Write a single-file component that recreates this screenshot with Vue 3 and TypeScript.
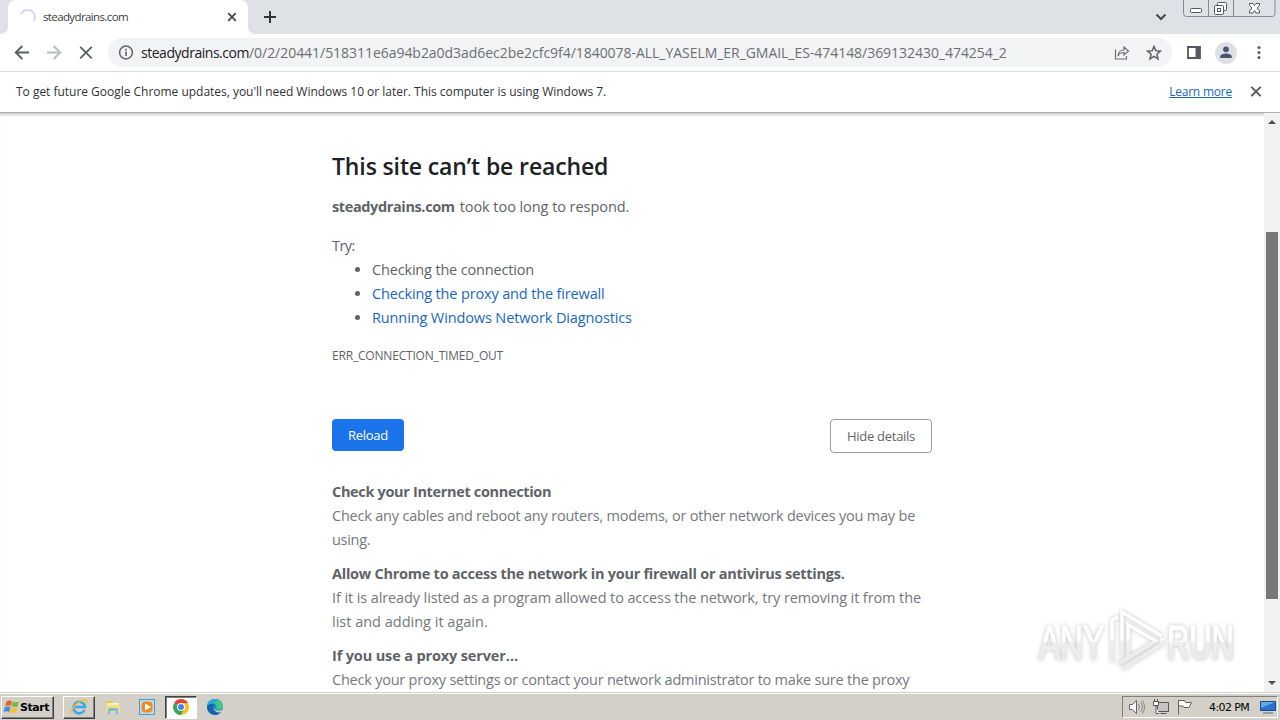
<script setup lang="ts">
const host = 'steadydrains.com'
const path = '/0/2/20441/518311e6a94b2a0d3ad6ec2be2cfc9f4/1840078-ALL_YASELM_ER_GMAIL_ES-474148/369132430_474254_2'
const suggestions = [
  { text: 'Checking the connection', link: false },
  { text: 'Checking the proxy and the firewall', link: true },
  { text: 'Running Windows Network Diagnostics', link: true },
]
const details = [
  { title: 'Check your Internet connection', lines: ['Check any cables and reboot any routers, modems, or other network devices you may be', 'using.'] },
  { title: 'Allow Chrome to access the network in your firewall or antivirus settings.', lines: ['If it is already listed as a program allowed to access the network, try removing it from the', 'list and adding it again.'] },
  { title: 'If you use a proxy server…', lines: ['Check your proxy settings or contact your network administrator to make sure the proxy'] },
]
</script>

<template>
  <div class="screen">
    <header class="tabs">
      <div class="prev"></div>
      <div class="tab">
        <svg class="spin" width="16" height="16" viewBox="0 0 16 16"><path d="M1 5.500A7.200 7.200 0 0 1 8 1a7 7 0 0 1 7 7 7 7 0 0 1-1.300 4" fill="none" stroke="#d5d5f5" stroke-width="1.800" /></svg>
        <span class="tab-title">{{ host }}</span>
        <svg width="10" height="10" viewBox="0 0 10 10"><path d="M1.200 1.200l7.600 7.600M8.800 1.200L1.200 8.800" stroke="#45484c" stroke-width="1.800" /></svg>
      </div>
      <div class="after-tab"><svg width="14" height="14" viewBox="0 0 14 14"><path d="M7 1v12M1 7h12" stroke="#303338" stroke-width="2" /></svg></div>
      <svg class="chev" width="12" height="8" viewBox="0 0 12 8"><path d="M1.500 1.500L6 6l4.500-4.500" fill="none" stroke="#44474b" stroke-width="2" /></svg>
      <svg class="winctl" width="94" height="18" viewBox="0 0 94 18">
        <path d="M.5 0v13.500q0 3 3 3h85.500q3 0 3-3V0M25.500 0v16M50.500 0v16" fill="none" stroke="#858990" />
        <g fill="#fff" stroke="#54575d">
          <rect x="7.500" y="8.500" width="11" height="4" rx="1" />
          <rect x="34.500" y="2.500" width="9" height="8" rx="1" />
          <rect x="31.500" y="5.500" width="9" height="9" rx="1" />
          <rect x="34.500" y="8.500" width="3" height="3" />
          <path d="M66.500 3.500h3.500l1.500 2 1.500-2h3.500v2l-2.500 2.500 2.500 3v2H73l-1.500-2.500L70 13h-3.500v-2l2.500-3-2.500-2.500z" />
        </g>
      </svg>
    </header>

    <nav class="toolbar">
      <svg width="16" height="16" viewBox="0 0 16 16"><path d="M15 7.500H2M8.300 1L1.800 7.500l6.500 6.500" fill="none" stroke="#5a5d61" stroke-width="1.900" /></svg>
      <svg class="fwd" width="16" height="16" viewBox="0 0 16 16"><path d="M1 7.500h13M7.700 1l6.500 6.500L7.700 14" fill="none" stroke="#b9bbbe" stroke-width="1.900" /></svg>
      <svg class="stop" width="14" height="14" viewBox="0 0 14 14"><path d="M1.200.8l11.600 11.600M12.800.8L1.200 12.400" stroke="#5a5d61" stroke-width="1.800" /></svg>
      <div class="omnibox">
        <svg width="16" height="16" viewBox="0 0 16 16"><circle cx="8" cy="7.500" r="6.400" fill="none" stroke="#5f6368" stroke-width="1.500" /><path d="M8 6.500V11M8 3.800v1.700" stroke="#5f6368" stroke-width="1.600" /></svg>
        <div class="url"><span class="host">{{ host }}</span><span class="path">{{ path }}</span></div>
        <svg width="16" height="16" viewBox="0 0 16 16"><path d="M1.500 4.500v9.500h11v-3M4 11c.3-4 2.600-6 6-6V2L14.500 6 10 10V7.500c-3 0-4.700.8-6 3.500z" fill="none" stroke="#6a6d72" stroke-width="1.200" /></svg>
        <svg class="star" width="16" height="16" viewBox="0 0 16 16"><path d="M8 1.400l1.800 4.300 4.700.4-3.600 3.100 1.100 4.600L8 11.300l-4 2.500 1.100-4.600L1.500 6.100l4.700-.4z" fill="none" stroke="#5f6368" stroke-width="1.500" /></svg>
      </div>
      <svg class="panel" width="14" height="14" viewBox="0 0 14 14"><path d="M1 1h12v11H1z" fill="#fff" stroke="#55585c" stroke-width="1.800" /><path d="M8.500 1H13v11H8.500z" fill="#55585c" /></svg>
      <svg class="avatar" width="22" height="22" viewBox="0 0 22 22"><circle cx="11" cy="11" r="11" fill="#dde0e5" /><circle cx="11" cy="7.300" r="2.900" fill="#495573" /><path d="M5.200 16v-1.600c0-2 3.400-3 5.800-3s5.800 1 5.800 3V16z" fill="#495573" /></svg>
      <svg class="dots" width="4" height="14" viewBox="0 0 4 14" fill="#55585c"><circle cx="2" cy="1.600" r="1.500" /><circle cx="2" cy="6.500" r="1.500" /><circle cx="2" cy="11.500" r="1.500" /></svg>
    </nav>

    <div class="infobar">
      <span class="info">To get future Google Chrome updates, you'll need Windows 10 or later. This computer is using Windows 7.</span>
      <a class="learn">Learn more</a>
      <svg width="12" height="12" viewBox="0 0 12 12"><path d="M1.300 1.800l9.400 9.400M10.700 1.800l-9.400 9.400" stroke="#55585c" stroke-width="1.900" /></svg>
    </div>

    <main class="viewport">
      <div class="page">
        <h1>This site can’t be reached</h1>
        <p class="summary"><strong>{{ host }}</strong><span class="took">took too long to respond.</span></p>
        <p class="try">Try:</p>
        <ul><li v-for="(s, i) in suggestions" :key="i"><span :class="['s' + i, { link: s.link }]">{{ s.text }}</span></li></ul>
        <p class="code">ERR_CONNECTION_TIMED_OUT</p>
        <div class="buttons"><button class="reload">Reload</button><button class="hide">Hide details</button></div>
        <section v-for="(d, i) in details" :key="i" :class="'d' + i">
          <h2>{{ d.title }}</h2>
          <p v-for="(l, j) in d.lines" :key="j" :class="'l' + j">{{ l }}</p>
        </section>
      </div>
      <div class="scroll">
        <svg width="8" height="4" viewBox="0 0 8 4"><path d="M0 4l4-4 4 4z" fill="#505050" /></svg>
        <div class="thumb"></div>
        <svg class="down" width="8" height="4" viewBox="0 0 8 4"><path d="M0 0l4 4 4-4z" fill="#505050" /></svg>
      </div>
    </main>

    <svg class="mark" width="210" height="76" viewBox="0 0 210 76">
      <defs>
        <linearGradient id="fade" gradientUnits="userSpaceOnUse" x1="0" y1="6" x2="0" y2="68"><stop offset="0" stop-color="#fff" /><stop offset=".5" stop-color="#fff" /><stop offset=".53" stop-color="#efefef" /><stop offset="1" stop-color="#ebebeb" /></linearGradient>
        <linearGradient id="letters" gradientUnits="userSpaceOnUse" x1="0" y1="-36" x2="0" y2="0"><stop offset="0" stop-color="#fff" /><stop offset=".5" stop-color="#fff" /><stop offset=".54" stop-color="#efefef" /><stop offset="1" stop-color="#ebebeb" /></linearGradient>
      </defs>
      <g class="glow">
        <text transform="translate(8 56) scale(.645 1)">ANY</text>
        <text transform="translate(136 56) scale(.63 1)">RUN</text>
        <path d="M81 59V17l6-3M91 53V9l40 24M97 54V22l28 16-38 23M91 66l40-25v-6" fill="none" stroke="url(#fade)" stroke-width="3.500" />
      </g>
    </svg>

    <footer class="taskbar">
      <div class="start">
        <svg width="17" height="16" viewBox="0 0 17 16"><path d="M3.500 2.500Q6 .8 9 2.200L7.700 7.200Q5 6 2.100 7.300z" fill="#e8632c" /><path d="M9.700 2.600q3 1.300 6.300-.2l-1.500 5q-3 1.400-6-.1z" fill="#7db940" /><path d="M1.800 8.200q2.800-1.200 5.700 0L6.200 13Q3.500 11.700.5 13z" fill="#3e91d8" /><path d="M8.300 8.500q3 1.300 6 .1l-1.400 4.900q-2.900 1.300-6-.2z" fill="#f6be31" /></svg>
        <span>Start</span>
      </div>
      <div class="task ie"><svg width="18" height="18" viewBox="0 0 18 18"><path d="M14.500 12A5.800 5.800 0 1 1 15 9H5" fill="none" stroke="#3fa5e5" stroke-width="2.600" /><path d="M2 15.500C-1 11 12-1 16.500 2.500q1 1-.5 3" fill="none" stroke="#efbd37" stroke-width="1.600" /></svg></div>
      <div class="task"><svg width="18" height="18" viewBox="0 0 18 18"><path d="M2 3h6l1 2h7v8H2z" fill="#e8c95f" /><path d="M3 5h12v4H3z" fill="#fff3b8" /><path d="M2 7h14v7H2z" fill="#f5dc84" /><path d="M4 16v-4q0-2 2-2h6q2 0 2 2v4h-2v-3H6v3z" fill="#79b9dc" /></svg></div>
      <div class="task"><svg width="18" height="18" viewBox="0 0 18 18"><rect x="1.500" y="1.500" width="15" height="15" fill="#b9dcf3" stroke="#4c9bcf" /><rect x="3.500" y="3.500" width="11" height="11" rx="4" fill="#f18a20" /><path d="M7 5.500l6 3.500-6 3.500z" fill="#fff" /></svg></div>
      <div class="task active"><svg width="18" height="18" viewBox="0 0 18 18"><path d="M9 9L2.100 5A8 8 0 0 1 15.900 5z" fill="#e44235" /><path d="M9 9L2.100 5A8 8 0 0 0 9 17l3.500-6z" fill="#35a653" /><path d="M9 9l3.500 2L9 17A8 8 0 0 0 15.900 5H9z" fill="#fbc116" /><circle cx="9" cy="9" r="4" fill="#fff" /><circle cx="9" cy="9" r="3" fill="#4285f4" /></svg></div>
      <div class="task"><svg width="18" height="18" viewBox="0 0 18 18"><circle cx="9" cy="9" r="8" fill="#1684cc" /><path d="M1 8C2 2 6 1 9 1c5 0 8 3.500 8 7 0 4-5 4.500-7 3 2-3-1-6-4-5.500Q3 6 1 8z" fill="#43c785" /><path d="M1 8C2 2 6 1 9 1q2 0 4 1Q9 3 8 6 3 5 1 8z" fill="#2aa9dd" /><path d="M1 8Q5 4 8 7 5 11 9 14q3 2 7-1-3 4-7 4Q1 16 1 8z" fill="#1763a9" /><path d="M9.500 8q-2 3 1 4.300 3 1 6.500-.8-.4 1.800-1.500 2.500-4 1.500-6.500-1.500-1.500-2.500.5-4.500z" fill="#d4d0c8" /></svg></div>
      <div class="tray">
        <svg width="18" height="18" viewBox="0 0 18 18"><path d="M1.500 6.500h3l4-4v13l-4-4h-3z" fill="#fff" stroke="#666" /><path d="M10.500 6q2 3 0 6M12.500 4q4 5 0 10M14.500 2.500q4 6.500 0 13" fill="none" stroke="#888" /></svg>
        <svg width="18" height="18" viewBox="0 0 18 18"><path d="M5.500 4.500h11v9h-11zM8.500 15.500h6" fill="#c4c4c4" stroke="#555" /><path d="M1.500 3.500h5v4h-5zM2.500 1v2M5.500 1v2M4 8v7.500h3" fill="#fff" stroke="#555" /></svg>
        <svg width="18" height="18" viewBox="0 0 18 18"><path d="M2.500 2v14.500M2.500 2.500h6l1 2h6l-2.500 5H8l-1-1.500H2.500z" fill="#fff" stroke="#666" /></svg>
        <span class="clock">4:02 PM</span>
        <svg class="desk" width="16" height="14" viewBox="0 0 16 14"><path d="M.5 1.500h15v9H.5z" fill="#2870ca" stroke="#174b91" /><path d="M1 2h14L1 8z" fill="#66a7e8" /><path d="M3 13h10" stroke="#546d8a" /></svg>
      </div>
    </footer>
  </div>
</template>

<style>
html, body { margin: 0; overflow: hidden; }
</style>

<style scoped>
* { box-sizing: border-box; }
.screen { position: relative; width: 1280px; height: 720px; overflow: hidden; display: flex; flex-direction: column; background: #fff; font-family: "Open Sans", "Noto Sans", sans-serif; color: #5f6368; white-space: nowrap; }
svg { display: block; flex: none; }
.tabs { height: 34px; flex: none; display: flex; background: #dee1e6; }
.prev { width: 8px; background: #fff; }
.prev::after { content: ""; display: block; height: 34px; background: #dee1e6; border-bottom-right-radius: 7px; }
.tab { width: 240px; height: 34px; border-radius: 8px 8px 0 0; background: #fff; display: flex; align-items: center; padding: 0 11px 0 12px; }
.tab-title { margin-left: 7px; padding-bottom: 2px; font-size: 11.500px; letter-spacing: -.62px; color: #3c4043; flex: 1; }
.after-tab { width: 60px; display: flex; align-items: center; padding-left: 15px; position: relative; background: linear-gradient(#fff, #fff) 0 100% / 10px 10px no-repeat; }
.after-tab::before { content: ""; position: absolute; inset: 0; background: #dee1e6; border-bottom-left-radius: 7px; }
.after-tab svg { position: relative; }
.chev { margin: 13px 0 0 auto; }
.winctl { margin-left: 16px; margin-right: 3px; }
.toolbar { height: 38px; flex: none; display: flex; align-items: center; padding-left: 14px; border-bottom: 1px solid #dadce0; }
.fwd { margin-left: 16px; }
.stop { margin-left: 17px; }
.omnibox { margin-left: 15px; width: 1064px; height: 29px; border-radius: 15px; background: #f1f3f4; display: flex; align-items: center; padding: 0 10px; }
.url { margin-left: 7px; flex: 1; font-size: 14px; color: #6b6f74; }
.host { color: #202124; letter-spacing: -.47px; }
.path { letter-spacing: -.04px; }
.star { margin-left: 16px; }
.panel { margin-left: 15px; }
.avatar { margin-left: 14px; }
.dots { margin-left: 20px; }
.infobar { height: 41px; flex: none; display: flex; align-items: center; padding: 0 18px 2px 16px; font-size: 12px; color: #303236; border-bottom: 1px solid #b0b0b0; }
.info { letter-spacing: -.02px; }
.learn { margin-left: auto; margin-right: 18px; color: #1a67c0; text-decoration: underline; letter-spacing: -.22px; }
.viewport { height: 579px; flex: none; display: flex; justify-content: space-between; box-shadow: inset 0 4px 3px -2px #ccc; overflow: hidden; }
.page { margin-left: 332px; width: 600px; font-size: 14.500px; line-height: 24px; }
p, h1, h2, ul { margin: 0; }
h1 { padding-top: 36px; font-size: 23px; line-height: 34px; font-weight: 600; color: #202124; letter-spacing: -.13px; }
.summary { margin-top: 12px; display: flex; gap: 5px; }
.summary strong { letter-spacing: -.38px; }
.took { letter-spacing: -.06px; }
.try { margin-top: 15px; letter-spacing: -.6px; }
ul { padding-left: 40px; }
.link { color: #1967c0; }
.s0 { letter-spacing: -.17px; }
.s1 { letter-spacing: -.15px; }
.s2 { letter-spacing: -.12px; }
.code { margin-top: 14px; font-size: 12px; letter-spacing: -.19px; }
.buttons { display: flex; justify-content: space-between; margin-top: 51px; height: 34px; }
button { font: 13px "Open Sans", sans-serif; letter-spacing: -.27px; border-radius: 4px; padding: 0; }
.reload { width: 72px; height: 32px; border: 0; background: #1a73e8; color: #fff; }
.hide { width: 102px; height: 34px; border: 1px solid #9aa0a6; background: #fff; color: #5f6368; }
section { margin-top: 10px; }
h2 { font-size: 14.500px; line-height: 24px; font-weight: 700; color: #5f6368; }
section p { color: #75787c; }
.d0 { margin-top: 27px; }
.d0 h2 { letter-spacing: -.34px; }
.d0 .l0 { letter-spacing: -.205px; }
.d0 .l1 { letter-spacing: -.3px; }
.d1 h2 { letter-spacing: -.255px; }
.d1 .l0 { letter-spacing: -.105px; }
.d2 h2 { letter-spacing: -.14px; }
.d2 .l0 { letter-spacing: -.225px; }
.scroll { width: 16px; height: 579px; background: #f1f1f1; display: flex; flex-direction: column; align-items: center; padding-top: 7px; }
.thumb { width: 12px; height: 367px; margin-top: 108px; background: #787878; }
.down { margin-top: 82px; }
.mark { position: absolute; left: 1031px; top: 603px; }
.mark text { font: 49px "Liberation Sans", sans-serif; fill: url(#letters); stroke: url(#letters); stroke-width: 1.500px; }
.glow { filter: drop-shadow(0 0 2px #c2c2c2); }
.taskbar { height: 28px; flex: none; display: flex; align-items: center; background: #d4d0c8; border-top: 1px solid #d4d0c8; box-shadow: inset 0 1px #fff; padding: 1px 2px 0 1px; }
.start { width: 53px; height: 23px; display: flex; align-items: center; padding-left: 1px; border: 1px solid; border-color: #fff #404040 #404040 #fff; box-shadow: inset -1px -1px #808080; font: bold 11px "DejaVu Sans", sans-serif; letter-spacing: -.45px; color: #000; }
.task { width: 34px; height: 23px; display: grid; place-items: center; }
.ie { margin-left: 9px; margin-right: 1px; width: 32px; border: 1px solid; border-color: #fff #404040 #404040 #fff; box-shadow: inset -1px -1px #808080; }
.active { background: #fff; border: 1px solid; border-color: #404040 #fff #fff #404040; box-shadow: inset 1px 1px #808080; width: 32px; margin: 0 1px; }
.tray { margin-left: auto; width: 156px; height: 22px; border: 1px solid; border-color: #808080 #fff #fff #808080; display: flex; align-items: center; gap: 6px; padding-left: 5px; color: #000; font: 11px "DejaVu Sans", sans-serif; }
.clock { margin-left: 9px; width: 40px; letter-spacing: -.6px; }
.desk { margin-left: 5px; }
</style>
